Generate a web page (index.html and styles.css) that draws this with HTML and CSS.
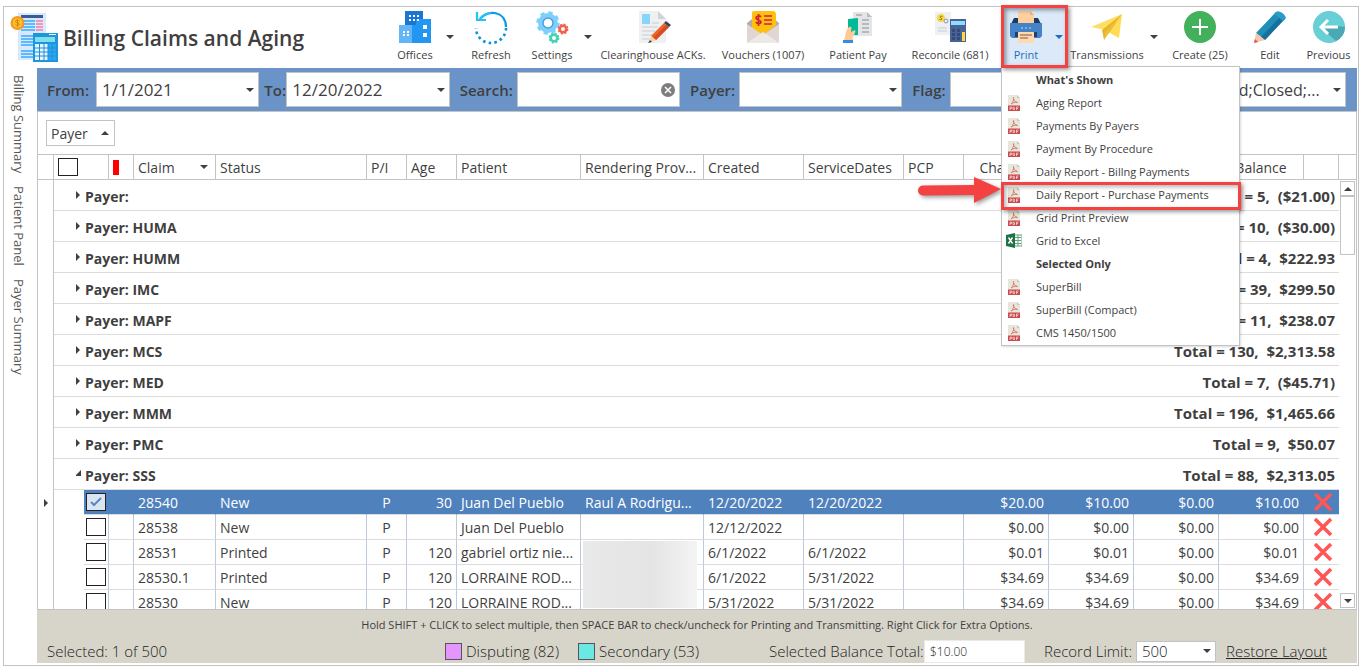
FILE: index.html
```html
<!DOCTYPE html>
<html lang="en">
<head>
    <meta charset="UTF-8">
    <meta name="viewport" content="width=device-width, initial-scale=1.0">
    <title>Billing Claims and Aging</title>
    <link rel="stylesheet" href="styles.css">
</head>
<body>
    <!-- Shared icons -->
    <svg class="sprite" aria-hidden="true">
        <symbol id="pdf" viewBox="0 0 12 16">
            <path d="M0 0h9l3 3v13H0z" fill="#e7e6da"/>
            <path d="M9 0l3 3H9z" fill="#c8c7b8"/>
            <path d="M3 9C5 7.500 6 5 5.500 2.500 5.500 5.500 7 6.500 9.500 7.500 7 7 5 7.500 3 9z" fill="none" stroke="#d8736c" stroke-width=".9"/>
            <path d="M0 10.500h12V16H0z" fill="#cb4a4e"/>
            <path d="M2 15v-3h1.500v1.500H2M5 12v2.500h1.500v-2zM8.500 15v-3h2M8.500 13.500H10" fill="none" stroke="#f3d5d5" stroke-width=".8"/>
        </symbol>
        <symbol id="excel" viewBox="0 0 16 15">
            <path d="M8 2h8v11H8z" fill="#fff" stroke="#5fa37c"/>
            <path d="M9 4.500h6M9 7.500h6M9 10.500h6M12 2v11" stroke="#5fa37c"/>
            <path d="M0 2l9-2v15l-9-2z" fill="#1f7244"/>
            <path d="M2.500 4.500l4 6M6.500 4.500l-4 6" stroke="#fff" stroke-width="1.400"/>
        </symbol>
        <symbol id="cross" viewBox="0 0 20 20">
            <path d="M2 2l16 16M18 2L2 18" stroke="#ff5656" stroke-width="3.600"/>
        </symbol>
    </svg>

    <div class="app">
        <header class="header">
            <svg class="logo" viewBox="0 0 48 50" aria-hidden="true">
                <path d="M8 1h27c2 0 1 3 1 7v40H8z" fill="#d9e8fb"/>
                <path d="M11 3h22v3H11z" fill="#3b5a9a"/>
                <path d="M11 9h14M11 12h14M11 15h14M11 18h14M11 24h12M11 27h12M11 30h12M11 33h12M11 39h12M11 42h12M11 45h12" stroke="#34abff" stroke-width="1.500"/>
                <path d="M26 9h7M26 12h7M26 15h7M26 18h7" stroke="#f77da8" stroke-width="1.500"/>
                <circle cx="7.500" cy="11" r="7" fill="#f39a1d"/>
                <circle cx="7.500" cy="11" r="4.800" fill="#ffc22b"/>
                <path d="M9.500 9c-1-1.200-4-1-4 .5s4 1.200 4 2.700-3 1.500-4 .4M7.500 7v8" fill="none" stroke="#d9800c"/>
                <path d="M23 21h25v29H23z" fill="#1e96dc"/>
                <path d="M25 25h20v5H25z" fill="#7fe0ea"/>
                <path d="M39 22.500h7" stroke="#fff"/>
                <path d="M25 32h13v16H25z" fill="#e6f5ff"/>
                <path d="M38 32h8v16h-8z" fill="#2ba7f0"/>
                <path d="M29.500 32v16M34 32v16M38 32v16M42 32v16M25 36h21M25 40h21M25 44h21" stroke="#1e8fd8"/>
            </svg>
            <h1>Billing Claims and Aging</h1>

            <nav class="toolbar" aria-label="Actions">
                <button class="tool">
                    <svg viewBox="0 0 32 32"><path d="M6 0h18v18H6z" fill="#1a76d2"/><path d="M13 14h4V8h15v24H13z" fill="#2196f3"/><path d="M0 14h13v18H0z" fill="#64b5f6"/><path d="M10 5h2M14 5h2M18 5h2M10 9h2M14 9h2M18 9h2M4 21h2M8 21h2M4 24h2M8 24h2" stroke="#fff" stroke-width="2"/><path d="M24 14h4v4h-4zM24 22h4v4h-4z" fill="#fff"/></svg>
                    Offices
                </button>
                <button class="caret" aria-label="Offices menu"></button>
                <button class="tool">
                    <svg viewBox="0 0 32 32" fill="none" stroke-width="2.200"><path d="M5 8C13-2 31 0 31 16" stroke="#0a9be8"/><path d="M5 8c3-4 7-6 11-6" stroke="#29c0f5"/><path d="M2 1v8h9" stroke="#20c4f8"/><path d="M31 17a15 15 0 0 1-30 0" stroke="#0a8fe0" stroke-width="2.600" stroke-dasharray="2.600 3.200"/></svg>
                    Refresh
                </button>
                <button class="tool">
                    <svg viewBox="0 0 32 32" fill="none"><circle cx="12" cy="12" r="9.500" stroke="#7dd0fb" stroke-width="4.500" stroke-dasharray="4 3.460"/><circle cx="12" cy="12" r="7.500" stroke="#7dd0fb" stroke-width="5"/><circle cx="12" cy="12" r="5" stroke="#4aa0dc" stroke-width="1.500" fill="#fff"/><circle cx="27" cy="18" r="3.300" stroke="#f4604d" stroke-width="2.600"/><circle cx="27" cy="18" r="4.700" stroke="#f4604d" stroke-width="1.500" stroke-dasharray="2 1.690"/><circle cx="18" cy="27" r="3.300" stroke="#45d0b8" stroke-width="2.600"/><circle cx="18" cy="27" r="4.700" stroke="#45d0b8" stroke-width="1.500" stroke-dasharray="2 1.690"/></svg>
                    Settings
                </button>
                <button class="caret" aria-label="Settings menu"></button>
                <button class="tool">
                    <svg viewBox="0 0 32 32"><path d="M2 0h19l8 8v24H2z" fill="#eff0f2"/><path d="M21 0l8 8h-8z" fill="#cfd4dc"/><path d="M5 3h8v10H5z" fill="#86d6fb"/><path d="M15 12h7M5 16h16M5 20h13M5 24h11M5 28h8" stroke="#c8cdd6"/><path d="M14 25L27 12l5 4-13 13z" fill="#f0622c"/><path d="M16 27l13-13 3 2-13 13z" fill="#d84a20"/><path d="M27 12l2-2 5 4-2 2z" fill="#34465a"/><path d="M14 25l5 4-7 3z" fill="#fbd49c"/><path d="M13 29l2 2-4 1z" fill="#34465a"/></svg>
                    Clearinghouse ACKs.
                </button>
                <button class="tool">
                    <svg viewBox="0 0 32 32"><path d="M0 12L5 8h22l5 4v20H0z" fill="#b9aaa8"/><path d="M5 2c0-2 2-2 4-2h16c3 0 4 1 4 4v10L16 24 5 17z" fill="#ffc10e"/><path d="M0 13l16 11L32 13v19H0z" fill="#e0d7d5"/><path d="M0 32l16-11 16 11z" fill="#eee8e6"/><path d="M14 6c-1-2-5-1-5 1s5 2 5 4-4 2-5 0M11.500 3v12M17 5h8M17 9h8M17 13h8" fill="none" stroke="#d51f3a" stroke-width="1.700"/></svg>
                    Vouchers (1007)
                </button>
                <button class="tool">
                    <svg viewBox="0 0 32 32"><path d="M11 1h14l5 5v19H11z" fill="#e4e5e7"/><path d="M25 1l5 5h-5z" fill="#b9bcc0"/><path d="M14 4h6M20 9h7M20 13h7M20 17h7M20 21h7" stroke="#888d92"/><path d="M6 8l10-1v17H6z" fill="#00b997"/><path d="M2 29c2-4 1-10 5-13 4-1 2 3 2 5l4-2c2 3-4 6-2 10z" fill="#ffc995"/><path d="M1 29h10v3H1z" fill="#3090df"/></svg>
                    Patient Pay
                </button>
                <button class="tool">
                    <svg viewBox="0 0 32 32"><path d="M1 1h16v23H1z" fill="#eef0f3"/><path d="M4 17h9M4 20h9" stroke="#c8ccd2"/><circle cx="7" cy="7" r="4" fill="#f7d84a"/><path d="M8.500 5.500c-2-1-3 .5-1.500 1.500s1 2-1.500 1.500" fill="none" stroke="#8b7500"/><circle cx="12" cy="10" r="2" fill="none" stroke="#8596b0"/><path d="M16 8h16v23H16z" fill="#4a6396"/><path d="M17 10h14v4H17z" fill="#8fdcff"/><path d="M18 18h3v3h-3zM23 18h3v3h-3zM18 22h3v3h-3zM23 22h3v3h-3zM18 26h3v3h-3zM23 26h3v3h-3z" fill="#334b7a"/><path d="M28 21h3v9h-3z" fill="#ffd83d"/></svg>
                    Reconcile (681)
                </button>

                <div class="print">
                    <button class="tool" aria-haspopup="true" aria-expanded="true">
                        <svg viewBox="0 0 32 32"><path d="M4 7h24l3 6H1z" fill="#1e3c62"/><path d="M8 0h12l4 4v8H8z" fill="#ffcf9e"/><path d="M20 0l4 4h-4z" fill="#e8b27c"/><path d="M0 12h32v13l-2 2H2l-2-2z" fill="#4583c8"/><path d="M11 17h2M15 17h2M19 17h2" stroke="#bcd6f2"/><path d="M5 21h22v5H5z" fill="#20406a"/><path d="M8 21h16v11H8z" fill="#ffd9b0"/><path d="M10 24h12M10 27h8" stroke="#7d5a3c"/></svg>
                        Print
                    </button>
                    <button class="caret" aria-label="Print menu"></button>
                    <div class="menu">
                        <h2>What's Shown</h2>
                        <button><svg><use href="#pdf"/></svg>Aging Report</button>
                        <button><svg><use href="#pdf"/></svg>Payments By Payers</button>
                        <button><svg><use href="#pdf"/></svg>Payment By Procedure</button>
                        <button><svg><use href="#pdf"/></svg>Daily Report - Billng Payments</button>
                        <button class="marked">
                            <svg><use href="#pdf"/></svg>Daily Report - Purchase Payments
                            <svg class="arrow" viewBox="0 0 84 28"><path d="M5 9.500L56 9V1l27 12-27 14v-8l-51 .5a5 5 0 0 1 0-10z" fill="#f44141"/></svg>
                        </button>
                        <button><svg><use href="#pdf"/></svg>Grid Print Preview</button>
                        <button><svg class="xls"><use href="#excel"/></svg>Grid to Excel</button>
                        <h2>Selected Only</h2>
                        <button><svg><use href="#pdf"/></svg>SuperBill</button>
                        <button><svg><use href="#pdf"/></svg>SuperBill (Compact)</button>
                        <button><svg><use href="#pdf"/></svg>CMS 1450/1500</button>
                    </div>
                </div>

                <button class="tool">
                    <svg viewBox="0 0 32 32"><path d="M0 16L31 3 14 19z" fill="#ffdf63"/><path d="M31 3L28 27 17 21z" fill="#ffdc55"/><path d="M31 3L11 19l2 10z" fill="#e5b52c"/><path d="M31 3L17 21l-4 8 2-8z" fill="#f4c53a"/></svg>
                    Transmissions
                </button>
                <button class="caret" aria-label="Transmissions menu"></button>
                <button class="tool">
                    <svg viewBox="0 0 32 32"><circle cx="16" cy="16" r="16" fill="#43b05c"/><path d="M16 8v16M8 16h16" stroke="#fff" stroke-width="2"/></svg>
                    Create (25)
                </button>
                <button class="tool">
                    <svg viewBox="0 0 32 32"><path d="M2 22L22 1c3-2 9 2 9 6L11 29z" fill="#1f8fb8"/><path d="M7 26L28 4c2 1 3 2 3 4L11 29z" fill="#176f9c"/><path d="M22 1c3-2 9 2 10 6l-3 3-9-7z" fill="#2b9cc6"/><path d="M2 22l9 7-11 3z" fill="#f3c6ae"/><path d="M1 28l3 3-4 1z" fill="#e0524c"/></svg>
                    Edit
                </button>
                <button class="tool">
                    <svg viewBox="0 0 32 32"><circle cx="16" cy="16" r="16" fill="#68cfd6"/><path d="M8 16l7 7 8 7a16 16 0 0 0 9-14l-7-1z" fill="#4aa9b5"/><path d="M25 16H9M15 9l-7 7 7 7" fill="none" stroke="#fff" stroke-width="3"/></svg>
                    Previous
                </button>
            </nav>
        </header>

        <div class="body">
            <aside class="side-tabs">
                <button>Billing Summary</button>
                <button>Patient Panel</button>
                <button>Payer Summary</button>
            </aside>

            <main class="content">
                <form class="filters">
                    <label for="from">From:</label>
                    <input id="from" class="field drop" type="text" value="1/1/2021">
                    <label for="to">To:</label>
                    <input id="to" class="field drop" type="text" value="12/20/2022">
                    <label for="search">Search:</label>
                    <div class="field search">
                        <input id="search" type="text">
                        <button type="button" aria-label="Clear search">
                            <svg viewBox="0 0 14 14"><circle cx="7" cy="7" r="7" fill="#7d7d7d"/><path d="M4 4l6 6M10 4l-6 6" stroke="#fff" stroke-width="1.500"/></svg>
                        </button>
                    </div>
                    <label for="payer">Payer:</label>
                    <select id="payer" class="field drop"><option></option></select>
                    <label for="flag">Flag:</label>
                    <select id="flag" class="field drop"><option></option></select>
                    <label for="status">Status:</label>
                    <select id="status" class="field drop"><option>Opened;Closed;...</option></select>
                </form>

                <div class="grouping">
                    <button>Payer <span class="up"></span></button>
                </div>

                <div class="grid">
                    <div class="table-wrap">
                        <table>
                            <colgroup>
                                <col class="w-mark"><col class="w-indent"><col class="w-check"><col class="w-flag"><col class="w-claim"><col><col class="w-pi"><col class="w-age"><col class="w-patient"><col class="w-prov"><col class="w-date"><col class="w-date"><col class="w-pcp"><col class="w-money"><col class="w-money"><col class="w-money"><col class="w-money"><col class="w-del">
                            </colgroup>
                            <thead>
                                <tr>
                                    <th></th>
                                    <th colspan="2"><input type="checkbox" aria-label="Select all"></th>
                                    <th><span class="red-flag"></span></th>
                                    <th class="sorted">Claim</th>
                                    <th>Status</th>
                                    <th>P/I</th>
                                    <th>Age</th>
                                    <th>Patient</th>
                                    <th>Rendering Prov...</th>
                                    <th>Created</th>
                                    <th>ServiceDates</th>
                                    <th>PCP</th>
                                    <th class="mid">Charges</th>
                                    <th></th>
                                    <th></th>
                                    <th class="mid">Balance</th>
                                    <th></th>
                                </tr>
                            </thead>
                            <tbody>
                                <tr class="group"><td></td><td colspan="17"><div><span>Payer:</span><span class="total">Total = 5,&nbsp; ($21.00)</span></div></td></tr>
                                <tr class="group"><td></td><td colspan="17"><div><span>Payer: HUMA</span><span class="total">Total = 10,&nbsp; ($30.00)</span></div></td></tr>
                                <tr class="group"><td></td><td colspan="17"><div><span>Payer: HUMM</span><span class="total">Total = 4,&nbsp; $222.93</span></div></td></tr>
                                <tr class="group"><td></td><td colspan="17"><div><span>Payer: IMC</span><span class="total">Total = 39,&nbsp; $299.50</span></div></td></tr>
                                <tr class="group"><td></td><td colspan="17"><div><span>Payer: MAPF</span><span class="total">Total = 11,&nbsp; $238.07</span></div></td></tr>
                                <tr class="group"><td></td><td colspan="17"><div><span>Payer: MCS</span><span class="total">Total = 130,&nbsp; $2,313.58</span></div></td></tr>
                                <tr class="group"><td></td><td colspan="17"><div><span>Payer: MED</span><span class="total">Total = 7,&nbsp; ($45.71)</span></div></td></tr>
                                <tr class="group"><td></td><td colspan="17"><div><span>Payer: MMM</span><span class="total">Total = 196,&nbsp; $1,465.66</span></div></td></tr>
                                <tr class="group"><td></td><td colspan="17"><div><span>Payer: PMC</span><span class="total">Total = 9,&nbsp; $50.07</span></div></td></tr>
                                <tr class="group open"><td></td><td colspan="17"><div><span>Payer: SSS</span><span class="total">Total = 88,&nbsp; $2,313.05</span></div></td></tr>
                                <tr class="row selected"><td><span class="pointer"></span></td><td></td><td><input type="checkbox" aria-label="Claim 28540" checked></td><td></td><td>28540</td><td>New</td><td class="mid">P</td><td class="num">30</td><td>Juan Del Pueblo</td><td>Raul A Rodrigu...</td><td>12/20/2022</td><td>12/20/2022</td><td></td><td class="num">$20.00</td><td class="num">$10.00</td><td class="num">$0.00</td><td class="num">$10.00</td><td><button aria-label="Delete"><svg><use href="#cross"/></svg></button></td></tr>
                                <tr class="row"><td></td><td></td><td><input type="checkbox" aria-label="Claim 28538"></td><td></td><td>28538</td><td>New</td><td class="mid">P</td><td class="num"></td><td>Juan Del Pueblo</td><td></td><td>12/12/2022</td><td></td><td></td><td class="num">$0.00</td><td class="num">$0.00</td><td class="num">$0.00</td><td class="num">$0.00</td><td><button aria-label="Delete"><svg><use href="#cross"/></svg></button></td></tr>
                                <tr class="row"><td></td><td></td><td><input type="checkbox" aria-label="Claim 28531"></td><td></td><td>28531</td><td>Printed</td><td class="mid">P</td><td class="num">120</td><td>gabriel ortiz nie...</td><td class="hidden-names"><div></div></td><td>6/1/2022</td><td>6/1/2022</td><td></td><td class="num">$0.01</td><td class="num">$0.01</td><td class="num">$0.00</td><td class="num">$0.01</td><td><button aria-label="Delete"><svg><use href="#cross"/></svg></button></td></tr>
                                <tr class="row"><td></td><td></td><td><input type="checkbox" aria-label="Claim 28530.1"></td><td></td><td>28530.1</td><td>Printed</td><td class="mid">P</td><td class="num">120</td><td>LORRAINE ROD...</td><td></td><td>6/1/2022</td><td>5/31/2022</td><td></td><td class="num">$34.69</td><td class="num">$34.69</td><td class="num">$0.00</td><td class="num">$34.69</td><td><button aria-label="Delete"><svg><use href="#cross"/></svg></button></td></tr>
                                <tr class="row"><td></td><td></td><td><input type="checkbox" aria-label="Claim 28530"></td><td></td><td>28530</td><td>New</td><td class="mid">P</td><td class="num">120</td><td>LORRAINE ROD...</td><td></td><td>5/31/2022</td><td>5/31/2022</td><td></td><td class="num">$34.69</td><td class="num">$34.69</td><td class="num">$0.00</td><td class="num">$34.69</td><td><button aria-label="Delete"><svg><use href="#cross"/></svg></button></td></tr>
                            </tbody>
                        </table>
                    </div>
                    <div class="scrollbar">
                        <button aria-label="Scroll up"><span class="up"></span></button>
                        <div class="thumb"></div>
                        <button aria-label="Scroll down"><span class="down"></span></button>
                    </div>
                </div>

                <footer class="footer">
                    <p>Hold SHIFT + CLICK to select multiple, then SPACE BAR to check/uncheck for Printing and Transmitting. Right Click for Extra Options.</p>
                    <div class="summary">
                        <span class="count">Selected: 1 of 500</span>
                        <span class="legend disputing">Disputing (82)</span>
                        <span class="legend secondary">Secondary (53)</span>
                        <label class="balance" for="balance">Selected Balance Total:</label>
                        <input id="balance" type="text" value="$10.00" readonly>
                        <label class="limit" for="limit">Record Limit:</label>
                        <select id="limit" class="drop"><option>500</option></select>
                        <a href="#">Restore Layout</a>
                    </div>
                </footer>
            </main>
        </div>
    </div>
</body>
</html>
```

FILE: styles.css
```css
:root {
    --line: #c3c3c3;
    --text: #3f3f3f;
    --blue: #4f81bd;
    --red: #f44141;
    --down: url("data:image/svg+xml,%3Csvg xmlns='http://www.w3.org/2000/svg' width='8' height='4'%3E%3Cpath d='M0 0h8L4 4z' fill='%23404040'/%3E%3C/svg%3E");
    --down-blue: url("data:image/svg+xml,%3Csvg xmlns='http://www.w3.org/2000/svg' width='8' height='4'%3E%3Cpath d='M0 0h8L4 4z' fill='%231c6fc4'/%3E%3C/svg%3E");
    --up: url("data:image/svg+xml,%3Csvg xmlns='http://www.w3.org/2000/svg' width='8' height='4'%3E%3Cpath d='M0 4h8L4 0z' fill='%23404040'/%3E%3C/svg%3E");
    --right: url("data:image/svg+xml,%3Csvg xmlns='http://www.w3.org/2000/svg' width='4' height='8'%3E%3Cpath d='M0 0v8l4-4z' fill='%23404040'/%3E%3C/svg%3E");
    --open: url("data:image/svg+xml,%3Csvg xmlns='http://www.w3.org/2000/svg' width='6' height='6'%3E%3Cpath d='M0 6h6V0z' fill='%23404040'/%3E%3C/svg%3E");
}

* {
    box-sizing: border-box;
}

body {
    margin: 0;
    height: 100vh;
    padding: 6px 3px 2px;
    background: #fff;
    color: var(--text);
    font-family: "Open Sans", "Noto Sans", sans-serif;
    font-size: 14px;
}

button,
input,
select {
    font: inherit;
    color: inherit;
}

button {
    padding: 0;
    border: none;
    background: none;
    cursor: pointer;
}

.sprite {
    display: none;
}

.app {
    height: 100%;
    display: flex;
    flex-direction: column;
    border: 1px solid var(--line);
}

/* Header */
.header {
    display: flex;
    align-items: center;
    height: 61px;
    flex: none;
    padding: 0 3px 0 6px;
}

.logo {
    width: 48px;
    height: 50px;
    margin-bottom: 2px;
}

h1 {
    margin: 0 0 0 5px;
    font-size: 21px;
    font-weight: 600;
    white-space: nowrap;
}

.toolbar {
    display: grid;
    grid-template-columns: 58px 12px 70px 52px 20px 110px 110px 80px 104px 66px 78px 16px 76px 64px 53px;
    height: 100%;
    margin-left: auto;
}

.tool {
    display: flex;
    flex-direction: column;
    align-items: center;
    gap: 4px;
    padding-top: 4px;
    font-size: 11px;
    line-height: 16px;
    white-space: nowrap;
}

.tool svg {
    width: 32px;
    height: 32px;
    flex: none;
    overflow: visible;
}

.caret {
    background: var(--down) center 28px no-repeat;
}

.print .caret {
    background-image: var(--down-blue);
}

.print {
    position: relative;
    display: grid;
    grid-template-columns: 48px 18px;
    background: #dce9f8;
    color: #1c6fc4;
}

.print::after {
    content: "";
    position: absolute;
    inset: -2px 0 0 -1px;
    border: 3px solid var(--red);
    box-shadow: 2px 2px 4px rgba(0, 0, 0, 0.4), inset 2px 2px 4px rgba(0, 0, 0, 0.4);
    pointer-events: none;
    z-index: 3;
}

/* Print menu */
.menu {
    position: absolute;
    top: 59px;
    left: -1px;
    width: 239px;
    padding: 1px 0;
    background: #fff;
    border: 1px solid var(--line);
    box-shadow: 1px 1px 2px rgba(0, 0, 0, 0.15);
    color: var(--text);
    font-size: 11px;
    z-index: 2;
}

.menu h2 {
    margin: 0;
    padding-left: 34px;
    font-size: 11px;
    font-weight: 700;
    line-height: 23px;
}

.menu button {
    position: relative;
    display: flex;
    align-items: center;
    width: 100%;
    height: 23px;
    padding-left: 6px;
    white-space: nowrap;
}

.menu button svg {
    width: 12px;
    height: 16px;
    margin-right: 16px;
}

.menu button .xls {
    width: 16px;
    height: 15px;
    margin: 0 14px 0 -2px;
}

.menu .marked::after {
    content: "";
    position: absolute;
    inset: -1px -2px -4px -1px;
    border: 3px solid var(--red);
    box-shadow: 2px 2px 4px rgba(0, 0, 0, 0.4), inset 2px 2px 4px rgba(0, 0, 0, 0.3);
    z-index: 1;
}

.menu .marked .arrow {
    position: absolute;
    right: 100%;
    top: -7px;
    width: 84px;
    height: 28px;
    margin: 0;
    filter: drop-shadow(2px 2px 2px rgba(0, 0, 0, 0.4));
}

/* Side tabs and content */
.body {
    flex: 1;
    min-height: 0;
    display: flex;
    padding: 0 1px 2px 0;
}

.side-tabs {
    display: flex;
    flex-direction: column;
    align-items: center;
    gap: 13px;
    width: 33px;
    flex: none;
    padding: 7px 4px 0 0;
}

.side-tabs button {
    writing-mode: vertical-rl;
    font-size: 13px;
    color: #595959;
}

.content {
    flex: 1;
    min-width: 0;
    display: flex;
    flex-direction: column;
}

.filters {
    display: grid;
    grid-template-columns: 49px 1fr 27px 1fr 67px 1fr 59px 1fr 48px 1fr 69px 1fr;
    align-items: center;
    height: 43px;
    flex: none;
    padding: 0 11px 0 10px;
    background: #6a93c8;
}

.filters label {
    font-size: 15px;
    font-weight: 600;
    white-space: nowrap;
}

.filters label:not(:first-child) {
    padding-left: 5px;
}

.filters label:nth-of-type(n + 3) {
    padding-left: 10px;
}

.field {
    width: 100%;
    min-width: 0;
    height: 35px;
    padding: 0 24px 0 5px;
    border: 1px solid var(--line);
    border-radius: 0;
    background-color: #fff;
    font-size: 17px;
}

.filters select.field {
    font-size: 16px;
}

.drop {
    appearance: none;
    background: #fff var(--down) right 4px center no-repeat;
}

.search {
    display: flex;
    align-items: center;
    padding: 0 4px;
}

.search input {
    flex: 1;
    min-width: 0;
    border: none;
    outline: none;
}

.search button,
.search svg {
    display: block;
    width: 14px;
    height: 14px;
}

.grouping {
    height: 43px;
    flex: none;
    padding: 8px;
    border: 1px solid var(--line);
    border-bottom: none;
}

.grouping button {
    display: flex;
    align-items: center;
    justify-content: space-between;
    width: 69px;
    height: 26px;
    padding: 0 5px 0 4px;
    border: 1px solid var(--line);
}

.up,
.down {
    width: 8px;
    height: 4px;
    background: var(--up);
}

.down {
    background: var(--down);
}

/* Claims grid */
.grid {
    flex: 1;
    min-height: 0;
    display: flex;
    align-items: flex-start;
    overflow: hidden;
    border: 1px solid var(--line);
    border-top: none;
}

.table-wrap {
    flex: 1;
    min-width: 0;
}

table {
    width: 100%;
    table-layout: fixed;
    border-collapse: separate;
    border-spacing: 0;
}

.w-mark { width: 16px; }
.w-indent { width: 30px; }
.w-check { width: 25px; }
.w-flag { width: 25px; }
.w-claim { width: 82px; }
.w-pi { width: 40px; }
.w-age { width: 50px; }
.w-patient { width: 124px; }
.w-prov { width: 123px; }
.w-date { width: 100px; }
.w-pcp { width: 60px; }
.w-money { width: 85px; }
.w-del { width: 35px; }

th,
td {
    padding: 0 4px;
    white-space: nowrap;
    text-align: left;
    font-weight: 400;
}

th {
    height: 26px;
    border: solid var(--line);
    border-width: 1px 1px 1px 0;
}

.sorted {
    background: var(--down) right 7px center no-repeat;
}

.mid {
    text-align: center;
}

.num {
    text-align: right;
}

.red-flag {
    display: block;
    width: 6px;
    height: 15px;
    background: #f00;
}

input[type="checkbox"] {
    appearance: none;
    display: block;
    width: 20px;
    height: 18px;
    margin: 0;
    border: 1px solid #222;
    background: #fff;
}

input[type="checkbox"]:checked {
    background: #dbe5f1 url("data:image/svg+xml,%3Csvg xmlns='http://www.w3.org/2000/svg' width='12' height='10'%3E%3Cpath d='M1 5l3 3 7-7' fill='none' stroke='%235b87c5' stroke-width='2'/%3E%3C/svg%3E") center no-repeat;
}

.group td {
    height: 31px;
    padding: 0 4px 0 22px;
    border-bottom: 1px solid #dcdcdc;
    font-weight: 700;
}

.group td:first-child,
.row td:first-child {
    padding: 0 3px;
    border-right: 1px solid var(--line);
    border-bottom: none;
    background: #fff;
}

.group div {
    display: flex;
    align-items: center;
    justify-content: space-between;
    height: 22px;
    padding: 2px 0 0 9px;
    background: var(--right) left 7px no-repeat;
}

.group .total {
    font-size: 15px;
}

.open div {
    background: var(--open) -1px 7px no-repeat;
}

.row td {
    height: 25px;
    border-right: 1px solid #bccadc;
    border-bottom: 1px solid #dcdcdc;
}

.row td:nth-child(2) {
    border: none;
    background: #fff;
}

.row td:nth-child(3) {
    padding: 0 2px;
}

.row td:last-child {
    padding: 0 9px;
    border-right: none;
}

.row button,
.row button svg {
    display: block;
    width: 20px;
    height: 20px;
}

.selected td {
    background: var(--blue);
    border-right-color: var(--blue);
    color: #fff;
}

.pointer {
    display: block;
    width: 4px;
    height: 8px;
    margin-left: 3px;
    background: var(--right);
}

.hidden-names {
    position: relative;
}

.hidden-names div {
    position: absolute;
    top: 1px;
    left: 2px;
    width: 114px;
    height: 67px;
    background: linear-gradient(90deg, #e9e9e9, #e4e4e4 60%, #f4f4f4);
}

/* the two lines carry the header row across the top of the scrollbar */
.scrollbar {
    align-self: stretch;
    display: flex;
    flex-direction: column;
    width: 17px;
    flex: none;
    padding: 27px 1px 1px;
    background: linear-gradient(var(--line), var(--line)) 0 0 / 100% 1px no-repeat,
        linear-gradient(var(--line), var(--line)) 0 25px / 100% 1px no-repeat;
}

.scrollbar button {
    display: flex;
    align-items: center;
    justify-content: center;
    width: 15px;
    height: 15px;
    border: 1px solid var(--line);
}

.scrollbar .thumb {
    height: 59px;
    margin-bottom: auto;
    border: 1px solid var(--line);
}

/* Footer */
.footer {
    flex: none;
    height: 53px;
    background: #d7d5ca;
}

.footer p {
    margin: 0;
    padding-top: 5px;
    font-size: 11px;
    line-height: 20px;
    text-align: center;
}

.summary {
    display: flex;
    align-items: center;
    height: 28px;
    padding: 4px 31px 0 10px;
    color: #222;
    font-size: 15px;
    font-weight: 300;
    white-space: nowrap;
}

.count {
    flex: 1;
}

.legend {
    display: flex;
    align-items: center;
    gap: 4px;
    width: 133px;
}

.legend::before {
    content: "";
    width: 15px;
    height: 15px;
    border: 1px solid #555;
}

.disputing::before {
    background: #e495ff;
}

.secondary::before {
    background: #6ce8e4;
}

.balance {
    width: 155px;
    margin-left: 58px;
}

#balance {
    width: 101px;
    height: 23px;
    padding: 0 5px;
    border: 1px solid #eceae2;
    background: #fff;
    font-size: 12px;
}

.limit {
    width: 92px;
    margin-left: 19px;
}

#limit {
    width: 80px;
    height: 21px;
    padding: 0 5px;
    border: 1px solid var(--line);
    border-radius: 0;
    line-height: 18px;
}

.summary a {
    width: 100px;
    margin-left: 10px;
    color: inherit;
}
```
